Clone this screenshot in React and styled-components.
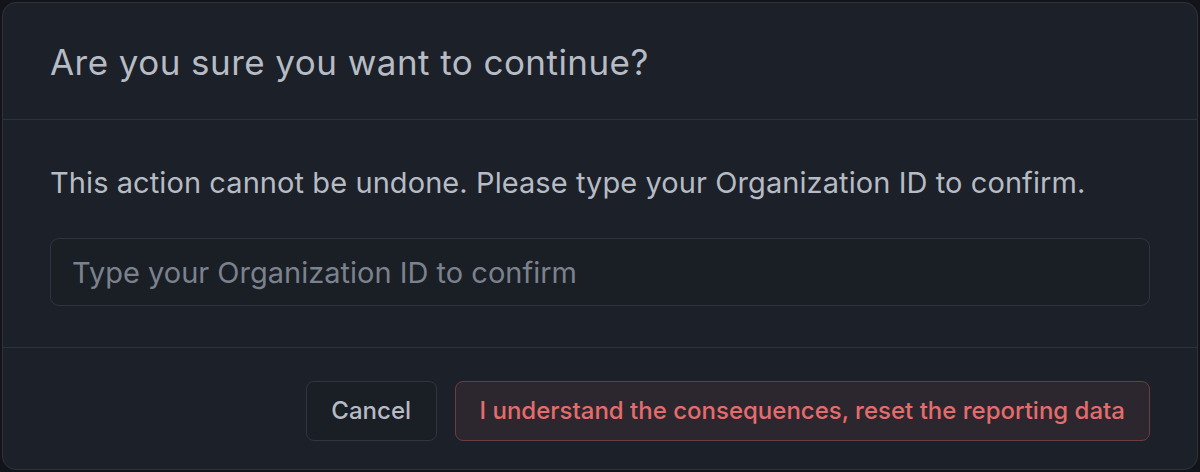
import styled, { createGlobalStyle } from 'styled-components';

const Global = createGlobalStyle`
  html, body {
    margin: 0;
    padding: 0;
    background: #121419;
  }
  * { box-sizing: border-box; }
`;

const Dialog = styled.div`
  margin: 2px;
  height: 468px;
  display: flex;
  flex-direction: column;
  background: #1c2028;
  border: 1px solid #2d333d;
  border-radius: 14px;
  font-family: Inter, "Noto Sans", sans-serif;
  overflow: hidden;
`;

const Header = styled.div`
  height: 117px;
  padding: 2px 47px 0;
  display: flex;
  align-items: center;
  border-bottom: 1px solid #2d333d;
`;

const Title = styled.h2`
  margin: 0;
  font-size: 35px;
  font-weight: 400;
  line-height: 42px;
  color: #b6bbc4;
  letter-spacing: 0.45px;
`;

const Body = styled.div`
  padding: 45px 47px 41px;
  display: flex;
  flex-direction: column;
  gap: 37px;
  border-bottom: 1px solid #2d333d;
`;

const Text = styled.p`
  margin: 0;
  font-size: 29px;
  line-height: 36px;
  color: #b6bbc4;
  letter-spacing: 0.08px;
`;

const Input = styled.input`
  height: 68px;
  width: 100%;
  padding: 0 21px;
  background: #1a1e25;
  border: 1px solid #2f3540;
  border-radius: 9px;
  font-family: inherit;
  font-size: 29px;
  color: #c5cad2;
  outline: none;

  &::placeholder {
    color: #7b828d;
  }
`;

const Footer = styled.div`
  flex: 1;
  display: flex;
  align-items: center;
  justify-content: flex-end;
  gap: 18px;
  padding: 4px 47px 0;
`;

const Button = styled.button`
  height: 60px;
  padding: 0 ${p => (p.$danger ? '24px' : '24.5px')};
  border-radius: 8px;
  font-family: inherit;
  font-size: 24px;
  font-weight: 500;
  cursor: pointer;
  background: ${p => (p.$danger ? '#2c272e' : '#1a1e25')};
  border: 1.5px solid ${p => (p.$danger ? '#6a3d40' : '#30363f')};
  color: ${p => (p.$danger ? '#e46c6c' : '#b6bbc4')};
`;

export default function App() {
  return (
    <>
      <Global />
      <Dialog>
        <Header>
          <Title>Are you sure you want to continue?</Title>
        </Header>
        <Body>
          <Text>This action cannot be undone. Please type your Organization ID to confirm.</Text>
          <Input placeholder="Type your Organization ID to confirm" />
        </Body>
        <Footer>
          <Button>Cancel</Button>
          <Button $danger>I understand the consequences, reset the reporting data</Button>
        </Footer>
      </Dialog>
    </>
  );
}
